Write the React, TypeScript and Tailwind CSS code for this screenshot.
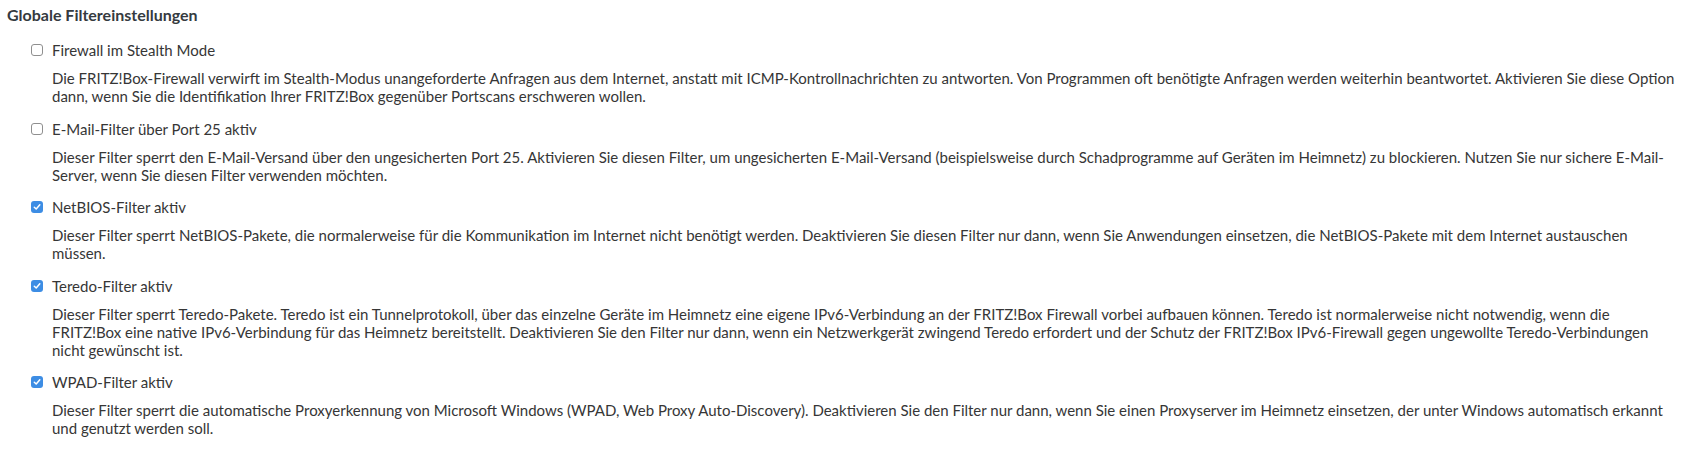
import React from "react";

type Item = { label: string; checked: boolean; lines: string[] };

const items: Item[] = [
  {
    label: "Firewall im Stealth Mode",
    checked: false,
    lines: [
      "Die FRITZ!Box-Firewall verwirft im Stealth-Modus unangeforderte Anfragen aus dem Internet, anstatt mit ICMP-Kontrollnachrichten zu antworten. Von Programmen oft benötigte Anfragen werden weiterhin beantwortet. Aktivieren Sie diese Option",
      "dann, wenn Sie die Identifikation Ihrer FRITZ!Box gegenüber Portscans erschweren wollen.",
    ],
  },
  {
    label: "E-Mail-Filter über Port 25 aktiv",
    checked: false,
    lines: [
      "Dieser Filter sperrt den E-Mail-Versand über den ungesicherten Port 25. Aktivieren Sie diesen Filter, um ungesicherten E-Mail-Versand (beispielsweise durch Schadprogramme auf Geräten im Heimnetz) zu blockieren. Nutzen Sie nur sichere E-Mail-",
      "Server, wenn Sie diesen Filter verwenden möchten.",
    ],
  },
  {
    label: "NetBIOS-Filter aktiv",
    checked: true,
    lines: [
      "Dieser Filter sperrt NetBIOS-Pakete, die normalerweise für die Kommunikation im Internet nicht benötigt werden. Deaktivieren Sie diesen Filter nur dann, wenn Sie Anwendungen einsetzen, die NetBIOS-Pakete mit dem Internet austauschen",
      "müssen.",
    ],
  },
  {
    label: "Teredo-Filter aktiv",
    checked: true,
    lines: [
      "Dieser Filter sperrt Teredo-Pakete. Teredo ist ein Tunnelprotokoll, über das einzelne Geräte im Heimnetz eine eigene IPv6-Verbindung an der FRITZ!Box Firewall vorbei aufbauen können. Teredo ist normalerweise nicht notwendig, wenn die",
      "FRITZ!Box eine native IPv6-Verbindung für das Heimnetz bereitstellt. Deaktivieren Sie den Filter nur dann, wenn ein Netzwerkgerät zwingend Teredo erfordert und der Schutz der FRITZ!Box IPv6-Firewall gegen ungewollte Teredo-Verbindungen",
      "nicht gewünscht ist.",
    ],
  },
  {
    label: "WPAD-Filter aktiv",
    checked: true,
    lines: [
      "Dieser Filter sperrt die automatische Proxyerkennung von Microsoft Windows (WPAD, Web Proxy Auto-Discovery). Deaktivieren Sie den Filter nur dann, wenn Sie einen Proxyserver im Heimnetz einsetzen, der unter Windows automatisch erkannt",
      "und genutzt werden soll.",
    ],
  },
];

function Box({ checked }: { checked: boolean }) {
  if (checked) {
    return (
      <span className="flex h-[12px] w-[12px] shrink-0 items-center justify-center rounded-[3px] bg-[#3d8de4]">
        <svg width="8" height="8" viewBox="0 0 8 8" fill="none">
          <path d="M1.3 4.2 L3.2 6 L6.8 1.8" stroke="white" strokeWidth="1.5" strokeLinecap="round" strokeLinejoin="round" />
        </svg>
      </span>
    );
  }
  return <span className="block h-[12px] w-[12px] shrink-0 rounded-[3px] border border-[#8f8f8f] bg-white" />;
}

export default function App() {
  return (
    <div
      className="h-[449px] w-[1696px] bg-white pl-[7px] pt-[6px] text-[#363636]"
      style={{ fontFamily: "Lato, 'Open Sans', sans-serif" }}
    >
      <h2 className="text-[16px] font-bold leading-[18px] text-[#353a40]">Globale Filtereinstellungen</h2>
      <div className="mt-[17px] flex flex-col gap-[14.5px] pl-[24px]">
        {items.map((it) => (
          <div key={it.label}>
            <div className="flex h-[18px] items-center gap-[9px] text-[15px]">
              <Box checked={it.checked} />
              <span className="leading-[18px]">{it.label}</span>
            </div>
            <div className="mt-[10px] pl-[21px] text-[15px] leading-[18px]">
              {it.lines.map((l, i) => (
                <div key={i} className="whitespace-nowrap">
                  {l}
                </div>
              ))}
            </div>
          </div>
        ))}
      </div>
    </div>
  );
}
